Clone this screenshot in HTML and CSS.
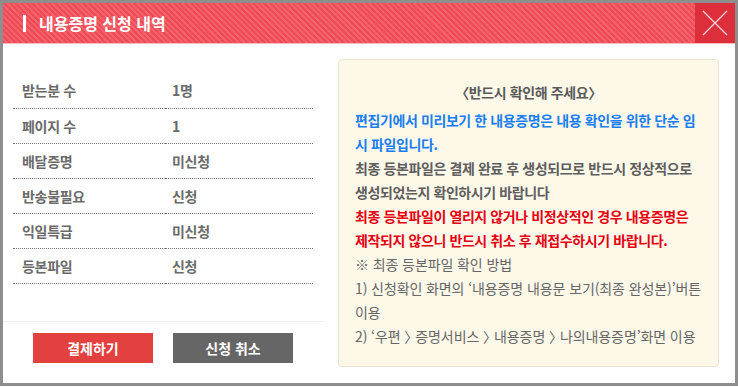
FILE: index.html
```html
<!DOCTYPE html>
<html lang="ko">
<head>
    <meta charset="UTF-8">
    <title>내용증명 신청 내역</title>
    <link rel="stylesheet" href="styles.css">
</head>
<body>
    <div class="popup">
        <div class="popup-head">
            <h1>내용증명 신청 내역</h1>
            <button class="btn-close" type="button" aria-label="닫기">
                <svg width="26" height="26" viewBox="0 0 26 26">
                    <path d="M1 1 L25 25 M25 1 L1 25" stroke="#f6d9dc" stroke-width="1.2" fill="none"/>
                </svg>
            </button>
        </div>

        <div class="popup-body">
            <div class="summary">
                <table class="summary-table">
                    <tr><th>받는분 수</th><td>1명</td></tr>
                    <tr><th>페이지 수</th><td>1</td></tr>
                    <tr><th>배달증명</th><td>미신청</td></tr>
                    <tr><th>반송불필요</th><td>신청</td></tr>
                    <tr><th>익일특급</th><td>미신청</td></tr>
                    <tr><th>등본파일</th><td>신청</td></tr>
                </table>

                <div class="summary-btns">
                    <button class="btn btn-pay" type="button">결제하기</button>
                    <button class="btn btn-cancel" type="button">신청 취소</button>
                </div>
            </div>

            <div class="notice">
                <p class="notice-title">〈반드시 확인해 주세요〉</p>
                <p class="txt-blue">편집기에서 미리보기 한 내용증명은 내용 확인을 위한 단순 임시 파일입니다.</p>
                <p class="txt-strong">최종 등본파일은 결제 완료 후 생성되므로 반드시 정상적으로 생성되었는지 확인하시기 바랍니다</p>
                <p class="txt-red">최종 등본파일이 열리지 않거나 비정상적인 경우 내용증명은 제작되지 않으니 반드시 취소 후 재접수하시기 바랍니다.</p>
                <p>※ 최종 등본파일 확인 방법</p>
                <p>1) 신청확인 화면의 ‘내용증명 내용문 보기(최종 완성본)’버튼 이용</p>
                <p>2) ‘우편 <span class="gt">〉</span>증명서비스 <span class="gt">〉</span>내용증명 <span class="gt">〉</span>나의내용증명’화면 이용</p>
            </div>
        </div>
    </div>
</body>
</html>
```

FILE: styles.css
```css
* {
    box-sizing: border-box;
}

body {
    margin: 0;
    background-color: #fff;
    font-family: "Noto Sans CJK KR", "Noto Sans", sans-serif;
}

.popup {
    width: 738px;
    height: 386px;
    border: 3px solid #8e8e8e;
    background-color: #fff;
    display: flex;
    flex-direction: column;
}

.popup-head {
    height: 41px;
    flex-shrink: 0;
    display: flex;
    align-items: center;
    justify-content: space-between;
    border-bottom: 1px solid #f6b9bd;
    background-color: #ef4b56;
    background-image: repeating-linear-gradient(45deg, #ef4b56 0, #ef4b56 2px, #f3626b 2px, #f3626b 4px);
}

.popup-head h1 {
    margin: 0 0 0 20px;
    padding-left: 13px;
    border-left: 3px solid #fff;
    height: 17px;
    line-height: 17px;
    color: #fff;
    font-size: 16px;
    font-weight: bold;
    letter-spacing: 0;
}

.btn-close {
    width: 40px;
    height: 40px;
    padding: 0;
    border: none;
    background-color: #dd2f3b;
    display: flex;
    align-items: center;
    justify-content: center;
    cursor: pointer;
}

.popup-body {
    flex: 1;
    display: flex;
}

.summary {
    width: 320px;
    display: flex;
    flex-direction: column;
}

.summary-table {
    margin: 29px 10px 0;
    width: 300px;
    border-collapse: collapse;
}

.summary-table th,
.summary-table td {
    height: 35px;
    padding: 0;
    border-bottom: 1px dotted #777;
    text-align: left;
    font-size: 14px;
    font-weight: bold;
    color: #6a6a6a;
    letter-spacing: -0.3px;
}

.summary-table th {
    width: 152px;
    padding-left: 9px;
}

.summary-table td {
    padding-left: 7px;
}

.summary-btns {
    margin-top: auto;
    height: 62px;
    border-top: 1px solid #eeeeee;
    padding-top: 11px;
    display: flex;
    justify-content: center;
    gap: 20px;
}

.btn {
    width: 120px;
    height: 30px;
    border: none;
    color: #fff;
    font-family: inherit;
    font-size: 14px;
    font-weight: bold;
    cursor: pointer;
}

.btn-pay {
    background-color: #e34040;
}

.btn-cancel {
    background-color: #666;
}

.notice {
    width: 381px;
    height: 308px;
    margin: 15px 0 0 15px;
    padding: 20px 16px 0;
    border: 1px solid #ebe4cf;
    border-radius: 4px;
    background-color: #fdf8e8;
    font-size: 14px;
    line-height: 24px;
    letter-spacing: -0.1px;
    color: #666;
    word-break: break-all;
}

.notice p {
    margin: 0;
}

.notice-title {
    text-align: center;
    font-weight: bold;
    color: #5a5a5a;
    letter-spacing: -0.4px;
    margin-bottom: 4px !important;
}

.notice .gt {
    letter-spacing: -3px;
}

.txt-blue,
.txt-strong,
.txt-red {
    font-weight: bold;
    letter-spacing: -0.4px;
}

.txt-blue {
    color: #1a7ef0;
}

.txt-strong {
    color: #5e5e5e;
}

.txt-red {
    color: #e50012;
}
```
